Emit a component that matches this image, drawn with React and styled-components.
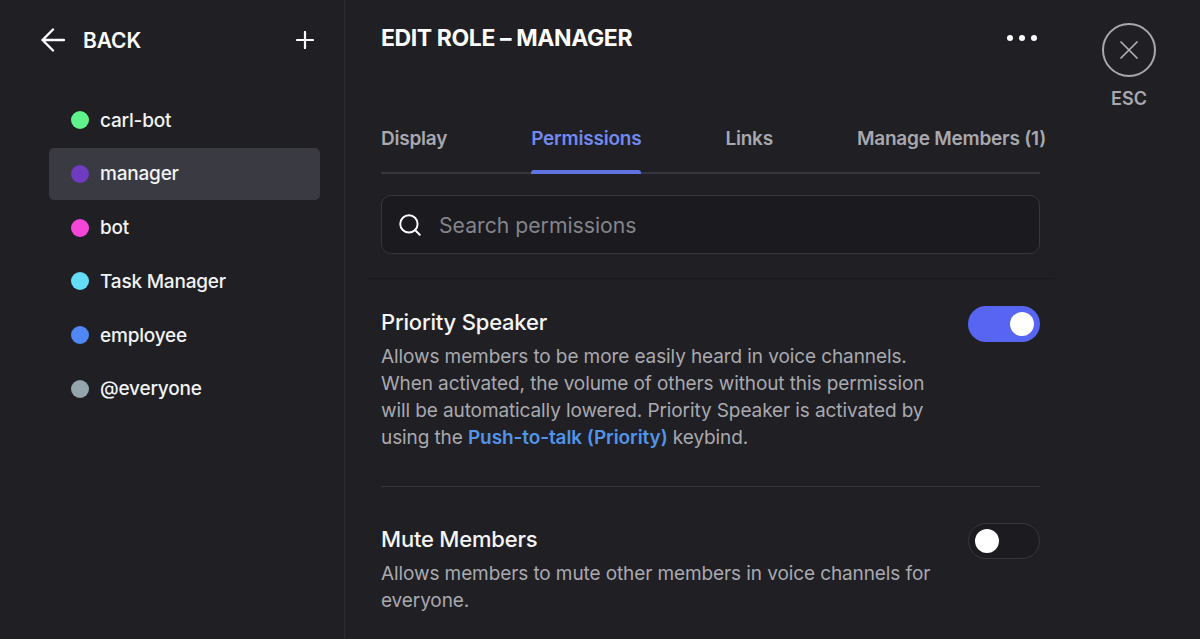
import React from 'react';
import styled, { createGlobalStyle } from 'styled-components';
import { Search, X } from 'lucide-react';

const GlobalStyle = createGlobalStyle`
  html, body {
    margin: 0;
    padding: 0;
    background: #1f1f24;
    overflow: hidden;
  }
`;

const Page = styled.div`
  width: 1200px;
  height: 639px;
  display: flex;
  overflow: hidden;
  background: #1f1f24;
  color: #fff;
  font-family: Inter, "Noto Sans", sans-serif;
`;

const Sidebar = styled.aside`
  width: 345px;
  flex: none;
  box-sizing: border-box;
  padding: 0 24px 0 41px;
  border-right: 1px solid #2a2a30;
`;

const SideHeader = styled.div`
  height: 80px;
  display: flex;
  align-items: center;
  justify-content: space-between;
  padding-right: 6px;
`;

const BackLink = styled.div`
  display: flex;
  align-items: center;
  gap: 18px;
  font-size: 21px;
  font-weight: 600;
  letter-spacing: -0.1px;
`;

const RoleList = styled.ul`
  list-style: none;
  margin: 14px 0 0 8px;
  padding: 0;
  display: flex;
  flex-direction: column;
  gap: 1.8px;
`;

const RoleItem = styled.li`
  height: 52px;
  display: flex;
  align-items: center;
  gap: 11px;
  padding-left: 22px;
  border-radius: 5px;
  font-size: 19px;
  font-weight: 500;
  letter-spacing: -0.2px;
  color: #f2f3f5;
  background: ${p => (p.$active ? '#3a3a42' : 'transparent')};
`;

const RoleDot = styled.span`
  width: 18px;
  height: 18px;
  border-radius: 50%;
  background: ${p => p.$color};
`;

const Main = styled.main`
  width: 710px;
  flex: none;
  box-sizing: border-box;
`;

const MainInner = styled.div`
  padding: 0 15px 0 36px;
`;

const TitleRow = styled.div`
  height: 76px;
  display: flex;
  align-items: center;
  justify-content: space-between;
`;

const Title = styled.h1`
  margin: 0;
  font-size: 23px;
  font-weight: 700;
  letter-spacing: -0.4px;
`;

const MoreDots = styled.div`
  display: flex;
  gap: 6px;
  padding-right: 3px;

  span {
    width: 6px;
    height: 6px;
    border-radius: 50%;
    background: #fff;
  }
`;

const Tabs = styled.div`
  margin-top: 45px;
  height: 51px;
  display: flex;
  gap: 84px;
  border-bottom: 2px solid #36363c;
  white-space: nowrap;
`;

const Tab = styled.div`
  position: relative;
  height: 51px;
  line-height: 36px;
  font-size: 19px;
  font-weight: 600;
  letter-spacing: -0.22px;
  color: ${p => (p.$active ? '#7289f0' : '#a8a8ae')};

  &::after {
    content: '';
    display: ${p => (p.$active ? 'block' : 'none')};
    position: absolute;
    left: 0;
    right: 0;
    bottom: -2px;
    height: 4px;
    border-radius: 3px 3px 0 0;
    background: #5f74e0;
  }
`;

const SearchBox = styled.div`
  margin-top: 21px;
  height: 59px;
  box-sizing: border-box;
  display: flex;
  align-items: center;
  gap: 16px;
  padding-left: 15px;
  background: #1a1a1f;
  border: 1px solid #36363c;
  border-radius: 10px;
  font-size: 21.2px;
  color: #84848b;
`;

const Divider = styled.div`
  height: 1px;
  margin: 24px 0 0 23px;
  background: #18181c;
`;

const Permission = styled.section`
  padding: 0 15px 0 36px;
  margin-top: ${p => p.$top}px;
`;

const PermissionBody = styled.div`
  padding-bottom: ${p => (p.$last ? '0' : '35px')};
  border-bottom: ${p => (p.$last ? 'none' : '1px solid #34343a')};
`;

const PermHead = styled.div`
  display: flex;
  align-items: center;
  justify-content: space-between;
  height: 36px;
`;

const PermName = styled.h2`
  margin: 0;
  padding-bottom: 5px;
  font-size: 22px;
  font-weight: 500;
  letter-spacing: -0.2px;
  color: #f5f5f7;
`;

const PermText = styled.p`
  margin: 1px 0 0;
  width: 570px;
  font-size: 19px;
  line-height: 27px;
  color: #a9a9af;
  letter-spacing: -0.1px;
`;

const PermLink = styled.span`
  color: #5294e8;
  font-weight: 600;
`;

const Toggle = styled.div`
  width: 72px;
  height: 36px;
  box-sizing: border-box;
  display: flex;
  align-items: center;
  justify-content: ${p => (p.$on ? 'flex-end' : 'flex-start')};
  padding: 0 6px;
  border-radius: 18px;
  background: ${p => (p.$on ? '#5865f2' : '#1c1c20')};
  border: ${p => (p.$on ? 'none' : '1px solid #36363c')};

  &::after {
    content: '';
    width: 24px;
    height: 24px;
    border-radius: 50%;
    background: #fff;
  }
`;

const EscColumn = styled.div`
  flex: 1;
  display: flex;
  flex-direction: column;
  align-items: center;
  padding-top: 23px;
  margin-left: 3px;
`;

const EscCircle = styled.div`
  width: 54px;
  height: 54px;
  flex: none;
  box-sizing: border-box;
  display: flex;
  align-items: center;
  justify-content: center;
  border: 2.5px solid #a8a8ae;
  border-radius: 50%;
  color: #b0b0b6;
`;

const EscLabel = styled.div`
  margin-top: 11px;
  font-size: 18px;
  font-weight: 600;
  color: #a8a8ae;
`;

const BackArrow = () => (
  <svg width="24" height="24" viewBox="0 0 24 24" fill="none" stroke="#fff" strokeWidth="2.4" strokeLinecap="round" strokeLinejoin="round">
    <path d="M23 12H1.5M12 1.5 1.5 12 12 22.5" />
  </svg>
);

const PlusIcon = () => (
  <svg width="18" height="18" viewBox="0 0 18 18" fill="none" stroke="#fff" strokeWidth="2.2" strokeLinecap="round">
    <path d="M9 1v16M1 9h16" />
  </svg>
);

const roles = [
  { name: 'carl-bot', color: '#60f38c' },
  { name: 'manager', color: '#6f3cc0', active: true },
  { name: 'bot', color: '#f745d8' },
  { name: 'Task Manager', color: '#63dcf7' },
  { name: 'employee', color: '#4f88f5' },
  { name: '@everyone', color: '#95a5ae' },
];

const tabs = ['Display', 'Permissions', 'Links', 'Manage Members (1)'];

export default function App() {
  return (
    <Page>
      <GlobalStyle />
      <Sidebar>
        <SideHeader>
          <BackLink>
            <BackArrow />
            BACK
          </BackLink>
          <PlusIcon />
        </SideHeader>
        <RoleList>
          {roles.map(role => (
            <RoleItem key={role.name} $active={role.active}>
              <RoleDot $color={role.color} />
              {role.name}
            </RoleItem>
          ))}
        </RoleList>
      </Sidebar>

      <Main>
        <MainInner>
          <TitleRow>
            <Title>EDIT ROLE – MANAGER</Title>
            <MoreDots><span /><span /><span /></MoreDots>
          </TitleRow>
          <Tabs>
            {tabs.map(tab => (
              <Tab key={tab} $active={tab === 'Permissions'}>{tab}</Tab>
            ))}
          </Tabs>
          <SearchBox>
            <Search size={26} color="#fff" strokeWidth={1.8} />
            Search permissions
          </SearchBox>
        </MainInner>
        <Divider />
        <Permission $top={27}>
          <PermissionBody>
            <PermHead>
              <PermName>Priority Speaker</PermName>
              <Toggle $on />
            </PermHead>
            <PermText>
              Allows members to be more easily heard in voice channels. When activated, the volume of others without this permission will be automatically lowered. Priority Speaker is activated by using the <PermLink>Push-to-talk (Priority)</PermLink> keybind.
            </PermText>
          </PermissionBody>
        </Permission>
        <Permission $top={36}>
          <PermissionBody $last>
            <PermHead>
              <PermName>Mute Members</PermName>
              <Toggle />
            </PermHead>
            <PermText>
              Allows members to mute other members in voice channels for everyone.
            </PermText>
          </PermissionBody>
        </Permission>
      </Main>

      <EscColumn>
        <EscCircle><X size={32} strokeWidth={1.3} /></EscCircle>
        <EscLabel>ESC</EscLabel>
      </EscColumn>
    </Page>
  );
}
